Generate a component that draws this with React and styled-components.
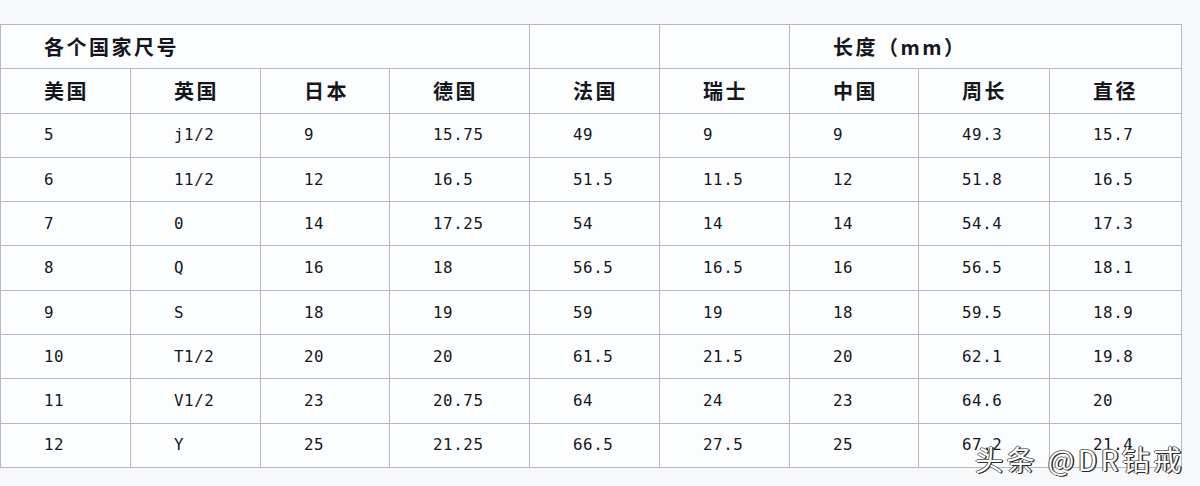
import React from "react";
import styled, { createGlobalStyle } from "styled-components";

const Global = createGlobalStyle`
  html, body { margin: 0; padding: 0; background: #f7f8fa; }
  body { width: 1200px; height: 486px; overflow: hidden; }
`;

const Page = styled.div`
  position: relative;
  width: 1200px;
  height: 486px;
  padding-top: 24px;
  box-sizing: border-box;
`;

const Table = styled.table`
  border-collapse: collapse;
  table-layout: fixed;
  width: 1182px;
  background: #fcfdff;
`;

const Cell = styled.td`
  border: 1px solid #b9b9bd;
  height: 44.3px;
  padding: 0 0 0 43px;
  box-sizing: border-box;
  vertical-align: middle;
  text-align: left;
  white-space: nowrap;
  color: #15151c;
  font-family: ${(p) =>
    p.$head
      ? `"Noto Sans CJK SC", "Noto Sans", sans-serif`
      : `"DejaVu Sans Mono", "Liberation Mono", monospace`};
  font-size: ${(p) => (p.$head ? "20px" : "15.8px")};
  font-weight: ${(p) => (p.$head ? 700 : 400)};
  letter-spacing: ${(p) => (p.$head ? "2.5px" : "0.6px")};
  line-height: 1;
`;

const Watermark = styled.div`
  position: absolute;
  left: 975px;
  top: 443px;
  font-family: "Noto Sans CJK SC", "Noto Sans", sans-serif;
  font-size: 28px;
  letter-spacing: 3.5px;
  line-height: 1.2;
  color: #ffffff;
  text-shadow: 1px 1px 0 #2a2a2a, -1px 0 0 #555, 0 -1px 0 #777, 1.5px 0 0 #2a2a2a;
  white-space: nowrap;
`;

const widths = [130, 130, 129, 140, 130, 130, 129, 131, 132];

const heads = ["美国", "英国", "日本", "德国", "法国", "瑞士", "中国", "周长", "直径"];

const rows = [
  ["5", "j1/2", "9", "15.75", "49", "9", "9", "49.3", "15.7"],
  ["6", "11/2", "12", "16.5", "51.5", "11.5", "12", "51.8", "16.5"],
  ["7", "0", "14", "17.25", "54", "14", "14", "54.4", "17.3"],
  ["8", "Q", "16", "18", "56.5", "16.5", "16", "56.5", "18.1"],
  ["9", "S", "18", "19", "59", "19", "18", "59.5", "18.9"],
  ["10", "T1/2", "20", "20", "61.5", "21.5", "20", "62.1", "19.8"],
  ["11", "V1/2", "23", "20.75", "64", "24", "23", "64.6", "20"],
  ["12", "Y", "25", "21.25", "66.5", "27.5", "25", "67.2", "21.4"],
];

export default function App() {
  return (
    <Page>
      <Global />
      <Table>
        <colgroup>
          {widths.map((w, i) => (
            <col key={i} style={{ width: w }} />
          ))}
        </colgroup>
        <tbody>
          <tr>
            <Cell $head colSpan={4}>各个国家尺号</Cell>
            <Cell $head />
            <Cell $head />
            <Cell $head colSpan={3}>长度（mm）</Cell>
          </tr>
          <tr>
            {heads.map((h) => (
              <Cell $head key={h}>{h}</Cell>
            ))}
          </tr>
          {rows.map((r, i) => (
            <tr key={i}>
              {r.map((v, j) => (
                <Cell key={j}>{v}</Cell>
              ))}
            </tr>
          ))}
        </tbody>
      </Table>
      <Watermark>头条 @DR钻戒</Watermark>
    </Page>
  );
}
